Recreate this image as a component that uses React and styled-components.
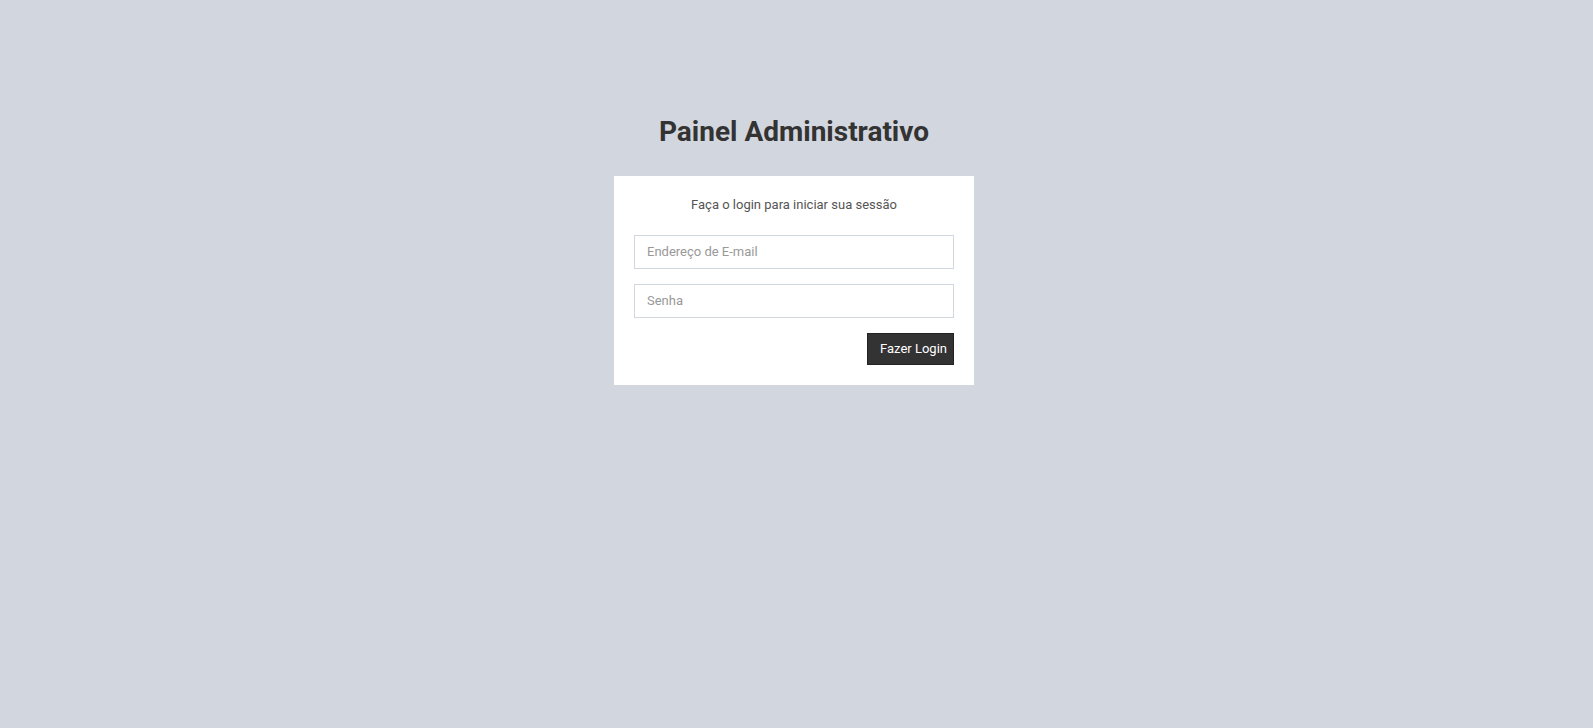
import React from "react";
import styled, { createGlobalStyle } from "styled-components";

const Global = createGlobalStyle`
  html, body { margin: 0; padding: 0; }
  body {
    background: #d2d6de;
    font-family: Roboto, "Liberation Sans", Arial, sans-serif;
    color: #333;
    min-height: 728px;
  }
  * { box-sizing: border-box; }
`;

const Page = styled.main`
  padding: 112px 5px 0 0;
`;

const LoginBox = styled.div`
  width: 360px;
  margin: 0 auto;
`;

const Logo = styled.h1`
  margin: 0 0 24px;
  font-size: 28px;
  line-height: 40px;
  font-weight: 700;
  text-align: center;
  color: #333;
`;

const Card = styled.form`
  background: #fff;
  padding: 20px;
  display: flex;
  flex-direction: column;
`;

const Message = styled.p`
  margin: 0;
  padding: 0 20px 22px;
  text-align: center;
  font-size: 13px;
  line-height: 17px;
  color: #555;
`;

const Field = styled.input`
  display: block;
  width: 100%;
  height: 34px;
  margin: 0 0 15px;
  padding: 5px 12px 7px;
  border: 1px solid #d2d6de;
  border-radius: 0;
  font-family: inherit;
  font-size: 13px;
  color: #555;
  background: #fff;
  outline: none;
  &::placeholder { color: #999; }
`;

const Actions = styled.div`
  display: flex;
  justify-content: flex-end;
`;

const Button = styled.button`
  height: 32px;
  padding: 0 6px 1px 12px;
  border: 1px solid #222;
  background: #333;
  color: #fff;
  font-family: inherit;
  font-size: 13px;
  font-weight: 400;
  border-radius: 0;
  cursor: pointer;
`;

export default function App() {
  return (
    <>
      <Global />
      <Page>
        <LoginBox>
          <Logo>Painel Administrativo</Logo>
          <Card onSubmit={(e) => e.preventDefault()}>
            <Message>Faça o login para iniciar sua sessão</Message>
            <Field type="email" placeholder="Endereço de E-mail" />
            <Field type="password" placeholder="Senha" />
            <Actions>
              <Button type="submit">Fazer Login</Button>
            </Actions>
          </Card>
        </LoginBox>
      </Page>
    </>
  );
}
